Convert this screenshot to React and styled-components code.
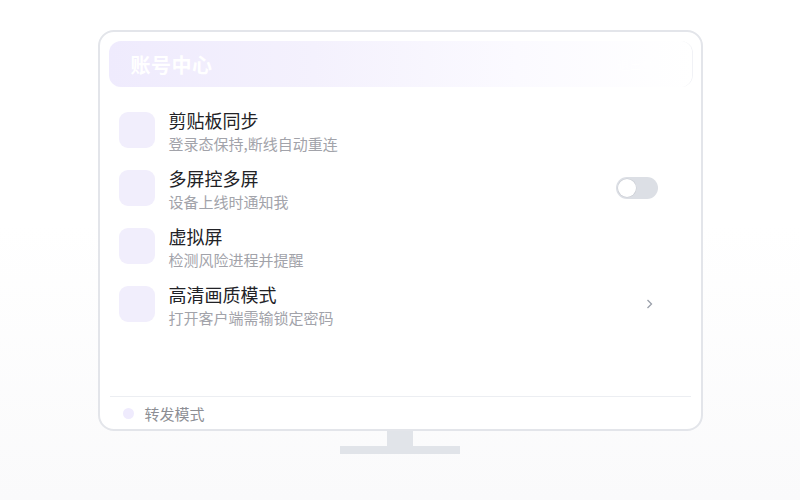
import React, { useState } from "react";
import styled, { createGlobalStyle } from "styled-components";

const GlobalStyle = createGlobalStyle`
  html, body {
    margin: 0;
    padding: 0;
  }
  body {
    font-family: "Noto Sans CJK SC", "Noto Sans", sans-serif;
    background: linear-gradient(180deg, #ffffff 0%, #ffffff 45%, #fafafb 100%);
    min-height: 500px;
  }
`;

const Page = styled.div`
  width: 800px;
  height: 500px;
  display: flex;
  flex-direction: column;
  align-items: center;
  padding-top: 30px;
  box-sizing: border-box;
`;

const Screen = styled.div`
  width: 605px;
  height: 401px;
  box-sizing: border-box;
  border: 2px solid #e3e5ea;
  border-radius: 16px;
  background: #ffffff;
  padding: 9px 9px 0 9px;
  display: flex;
  flex-direction: column;
`;

const Header = styled.div`
  height: 46px;
  border-radius: 12px;
  background: linear-gradient(90deg, #efebfd 0%, #f4f1fd 35%, #fbfaff 70%, #ffffff 100%);
  display: flex;
  align-items: center;
  justify-content: space-between;
  padding: 0 22px;
  box-shadow: 1px 0 0 #f1f2f6;
`;

const HeaderTitle = styled.span`
  color: #ffffff;
  font-size: 20px;
  font-weight: 700;
  letter-spacing: 0.5px;
`;

const HeaderAction = styled.span`
  color: #ffffff;
  font-size: 12px;
  margin-right: 4px;
`;

const List = styled.div`
  flex: 1;
  display: flex;
  flex-direction: column;
  padding: 25px 34px 0 10px;
`;

const Row = styled.div`
  height: 58px;
  display: flex;
  align-items: flex-start;
`;

const IconBox = styled.div`
  width: 36px;
  height: 36px;
  border-radius: 9px;
  background: #f1eefc;
  flex-shrink: 0;
`;

const Texts = styled.div`
  flex: 1;
  margin-left: 14px;
  margin-top: -5px;
  display: flex;
  flex-direction: column;
`;

const Title = styled.div`
  font-size: 18px;
  line-height: 26px;
  color: #222226;
`;

const Sub = styled.div`
  font-size: 15px;
  line-height: 22px;
  color: #a2a3aa;
`;

const Control = styled.div`
  height: 36px;
  display: flex;
  align-items: center;
  justify-content: flex-end;
`;

const Track = styled.button`
  width: 42px;
  height: 22px;
  border: none;
  border-radius: 11px;
  background: ${(p) => (p.$on ? "#8b7cf6" : "#dcdfe5")};
  padding: 2px;
  display: flex;
  justify-content: ${(p) => (p.$on ? "flex-end" : "flex-start")};
  cursor: pointer;
`;

const Knob = styled.span`
  width: 18px;
  height: 18px;
  border-radius: 50%;
  background: #ffffff;
  box-shadow: 0 0 0 0.5px #c9ccd3;
`;

const Chevron = styled.svg`
  margin-right: 5px;
`;

const Divider = styled.div`
  height: 1px;
  background: #eceef2;
  margin: 0 1px;
`;

const Footer = styled.div`
  height: 32px;
  display: flex;
  align-items: center;
  padding-left: 14px;
`;

const Dot = styled.span`
  width: 11px;
  height: 11px;
  border-radius: 50%;
  background: #efebfd;
`;

const FooterText = styled.span`
  margin-left: 11px;
  font-size: 15px;
  color: #8d8e94;
`;

const Neck = styled.div`
  width: 26px;
  height: 15px;
  background: #e1e4e9;
`;

const Base = styled.div`
  width: 120px;
  height: 8px;
  background: #e1e4e9;
`;

const items = [
  { title: "剪贴板同步", sub: "登录态保持,断线自动重连" },
  { title: "多屏控多屏", sub: "设备上线时通知我", control: "toggle" },
  { title: "虚拟屏", sub: "检测风险进程并提醒" },
  { title: "高清画质模式", sub: "打开客户端需输锁定密码", control: "chevron" },
];

function Toggle() {
  const [on, setOn] = useState(false);
  return (
    <Track $on={on} onClick={() => setOn(!on)}>
      <Knob />
    </Track>
  );
}

export default function App() {
  return (
    <>
      <GlobalStyle />
      <Page>
        <Screen>
          <Header>
            <HeaderTitle>账号中心</HeaderTitle>
            <HeaderAction>退出登录</HeaderAction>
          </Header>
          <List>
            {items.map((item) => (
              <Row key={item.title}>
                <IconBox />
                <Texts>
                  <Title>{item.title}</Title>
                  <Sub>{item.sub}</Sub>
                </Texts>
                <Control>
                  {item.control === "toggle" && <Toggle />}
                  {item.control === "chevron" && (
                    <Chevron width="7" height="10" viewBox="0 0 7 10">
                      <path d="M1.5 1 L5.5 5 L1.5 9" fill="none" stroke="#9aa0aa" strokeWidth="1.3" />
                    </Chevron>
                  )}
                </Control>
              </Row>
            ))}
          </List>
          <Divider />
          <Footer>
            <Dot />
            <FooterText>转发模式</FooterText>
          </Footer>
        </Screen>
        <Neck />
        <Base />
      </Page>
    </>
  );
}
